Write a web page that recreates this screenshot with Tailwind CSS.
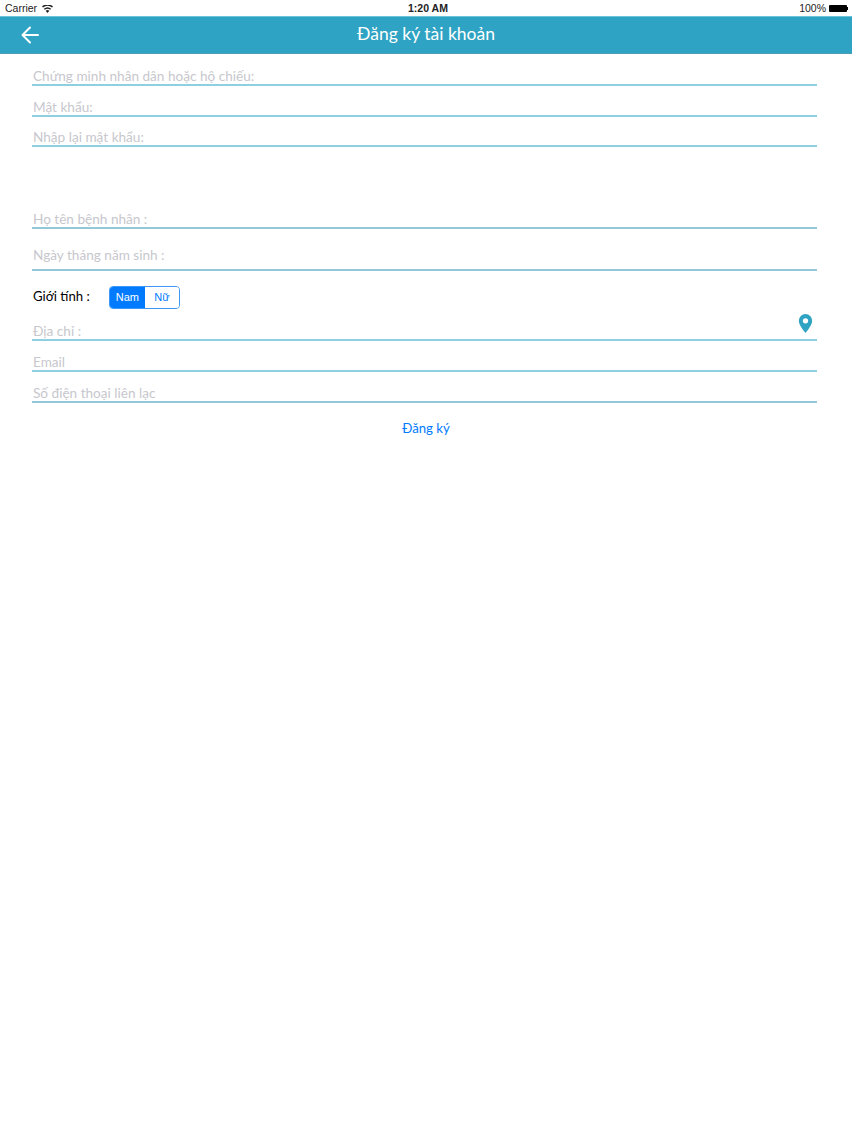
<!DOCTYPE html>
<html lang="vi">
<head>
    <meta charset="UTF-8">
    <meta name="viewport" content="width=device-width, initial-scale=1.0">
    <script src="https://cdn.jsdelivr.net/npm/@tailwindcss/browser@4"></script>
    <title>Đăng ký tài khoản</title>
</head>
<body class="w-[852px] h-[1136px] bg-white overflow-hidden font-['Lato','Noto_Sans',sans-serif]">

    <!-- Status bar -->
    <div class="h-4 pt-px flex items-center justify-between pl-[5px] pr-[4px] text-[10.5px] text-[#222] font-['Liberation_Sans',sans-serif] relative">
        <div class="flex items-center gap-[5px]">
            <span>Carrier</span>
            <svg class="w-[11px] h-2" viewBox="0 0 22 16" fill="#222">
                <path d="M11 16l-3.6-4.4a5.6 5.6 0 0 1 7.2 0z"/>
                <path d="M5.6 9.6L3.7 7.3a11.4 11.4 0 0 1 14.6 0l-1.9 2.3a8.4 8.4 0 0 0-10.8 0z"/>
                <path d="M2 5.2L0 2.8a17.2 17.2 0 0 1 22 0l-2 2.4a14.2 14.2 0 0 0-18 0z"/>
            </svg>
        </div>
        <span class="absolute left-[408px] font-bold text-[#222]">1:20 AM</span>
        <div class="flex items-center gap-[3px]">
            <span>100%</span>
            <div class="flex items-center">
                <div class="w-[18px] h-[7px] bg-black rounded-[1px]"></div>
                <div class="w-[1px] h-[3px] bg-black"></div>
            </div>
        </div>
    </div>

    <!-- Nav bar -->
    <div class="h-[38px] bg-[#2fa3c3] border-t border-[#6cc4da] border-b border-b-[#4d9db5] flex items-center relative">
        <svg class="ml-[21px] -mt-px w-[18px] h-[18px]" viewBox="0 0 18 18" fill="none" stroke="white" stroke-width="2" stroke-linecap="round" stroke-linejoin="round">
            <path d="M17 9H1.5M9 1.5L1.5 9 9 16.5"/>
        </svg>
        <span class="absolute inset-x-0 -translate-y-px text-center text-[17.5px] text-white">Đăng ký tài khoản</span>
    </div>

    <!-- Form -->
    <form class="pl-8 pr-[35px] text-[13.6px] leading-[16px] text-[#c7c7cd]">
        <div class="h-[32px] flex items-end pl-px border-b-2 border-[#8fd0e0]">Chứng minh nhân dân hoặc hộ chiếu:</div>
        <div class="h-[31px] flex items-end pl-px border-b-2 border-[#8fd0e0]">Mật khẩu:</div>
        <div class="h-[30px] flex items-end pl-px border-b-2 border-[#8fd0e0]">Nhập lại mật khẩu:</div>

        <div class="mt-[52px] h-[30px] flex items-end pl-px border-b-2 border-[#92c8d8]">Họ tên bệnh nhân :</div>
        <div class="h-[42px] flex items-end pl-px pb-[6px] border-b-2 border-[#92c8d8]">Ngày tháng năm sinh :</div>

        <div class="h-[38px] flex items-end pl-px gap-[19px]">
            <span class="text-[13.2px] text-black mb-[5px]">Giới tính :</span>
            <div class="w-[71px] h-[23px] flex border border-[#3d97f5] rounded-[4px] overflow-hidden text-[11px] leading-none font-['Liberation_Sans',sans-serif]">
                <div class="w-[35px] bg-[#007aff] text-white flex items-center justify-center">Nam</div>
                <div class="flex-1 bg-white text-[#007aff] flex items-center justify-center">Nữ</div>
            </div>
        </div>

        <div class="h-[32px] flex items-end justify-between pl-px border-b-2 border-[#8fd0e0] relative">
            <span>Địa chỉ :</span>
            <svg class="absolute right-[4px] top-[5px] w-[15px] h-[19px]" viewBox="0 0 14 20">
                <path fill="#2fa3c3" fill-rule="evenodd" d="M7 0a7 7 0 0 1 7 7c0 4.600-4.600 9.600-7 13C4.600 16.600 0 11.600 0 7a7 7 0 0 1 7-7zm0 4.400a2.800 2.800 0 1 0 0 5.600a2.800 2.800 0 0 0 0-5.600z"/>
            </svg>
        </div>
        <div class="h-[31px] flex items-end pl-px border-b-2 border-[#8fd0e0]">Email</div>
        <div class="h-[31px] flex items-end pl-px border-b-2 border-[#92c8d8]">Số điện thoại liên lạc</div>

        <div class="mt-[15px] pl-[3px] text-center text-[13.2px] leading-[21px] text-[#007aff]">Đăng ký</div>
    </form>

</body>
</html>
